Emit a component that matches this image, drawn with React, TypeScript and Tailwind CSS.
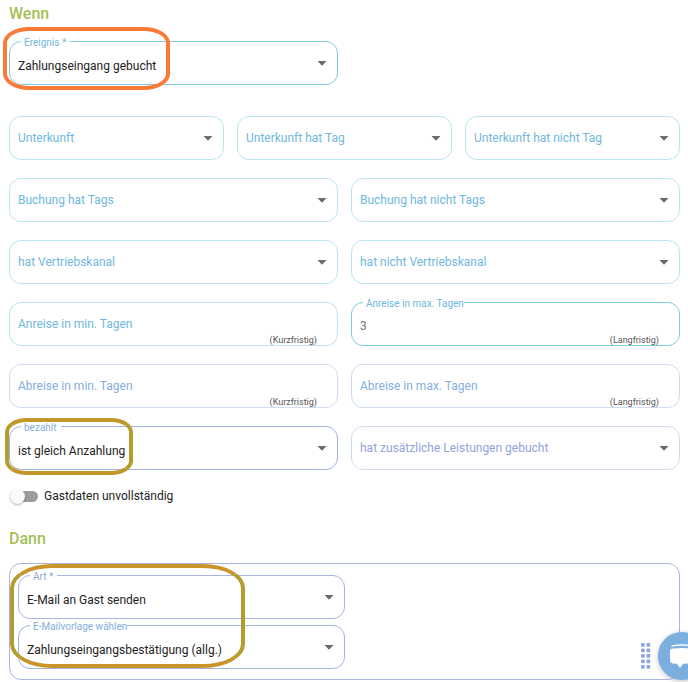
import React, { useState } from 'react'
import clsx from 'clsx'

type Tone = 'aqua' | 'sky' | 'lilac'

const borders: Record<Tone, { empty: string, filled: string }> = {
    aqua: { empty: 'border-[#bce4ef]', filled: 'border-[#7fcade]' },
    sky: { empty: 'border-[#cfdcf2]', filled: 'border-[#9fb4e2]' },
    lilac: { empty: 'border-[#d5daf1]', filled: 'border-[#a9b4e2]' },
}

const labels: Record<Tone, string> = {
    aqua: 'text-[#6fb8dc]',
    sky: 'text-[#86aedd]',
    lilac: 'text-[#90a5dc]',
}

interface FieldProps {
    id: string
    label: string
    value?: string
    tone?: Tone
    notch?: boolean
    hint?: string
    children?: React.ReactNode
}

const FieldLabel = ({ id, label, value, tone = 'aqua', notch }: FieldProps) => (
    <label
        htmlFor={id}
        className={clsx(
            'absolute pointer-events-none whitespace-nowrap',
            labels[tone],
            value ? 'left-[11px] -top-[6px] pl-[3px] text-[10px] leading-[14px] bg-white' : 'left-2 top-3 text-xs leading-[18px]',
            value && notch && 'pr-1'
        )}
    >
        {label}
    </label>
)

const SelectField = (props: FieldProps) => {
    const { id, value, tone = 'aqua', children } = props

    return (
        <div className={clsx('relative h-11 rounded-xl border', value ? borders[tone].filled : borders[tone].empty)}>
            <select
                id={id}
                defaultValue={value || ''}
                className={clsx('w-full h-full pl-2 pr-8 appearance-none bg-transparent text-xs text-[#222] rounded-xl focus:outline-none', value && 'pt-[6px]')}
            >
                <option value={value || ''}>{value || ''}</option>
            </select>
            <FieldLabel {...props} />
            <svg className="absolute right-[10px] top-[19px] pointer-events-none" width="10" height="5" viewBox="0 0 10 5">
                <path d="M.5 0h9L5 4.700z" fill="#6b6b6b" />
            </svg>
            {children}
        </div>
    )
}

const InputField = (props: FieldProps) => {
    const { id, value, tone = 'aqua', hint } = props

    return (
        <div className={clsx('relative h-11 rounded-xl border', value ? borders[tone].filled : borders[tone].empty)}>
            <input
                id={id}
                type="text"
                defaultValue={value}
                className="w-full h-full px-2 pt-1 bg-transparent text-xs text-[#777] rounded-xl focus:outline-none"
            />
            <FieldLabel {...props} />
            <span className="absolute right-[20px] -bottom-px text-[9px] leading-[11px] text-[#555] pointer-events-none">{hint}</span>
        </div>
    )
}

const Switch = ({ label }: { label: string }) => {
    const [checked, setChecked] = useState(false)

    return (
        <label className="flex items-center w-fit h-4 text-xs text-[#222]">
            <input type="checkbox" className="sr-only" checked={checked} onChange={() => setChecked(!checked)} />
            <span className="relative w-7 h-[11px] ml-px mr-[6px] rounded-full bg-[#9c9c9c]">
                <span className={clsx('absolute -top-[2px] size-[15px] rounded-full bg-[#fafafa] shadow-[0_1px_2px_rgba(0,0,0,0.3)]', checked ? 'right-0' : 'left-0')} />
            </span>
            {label}
        </label>
    )
}

const ChatButton = () => (
    <button aria-label="Chat" className="fixed bottom-[2px] -right-[18px] size-12 rounded-full bg-[#7aafdf] shadow-[0_1px_5px_rgba(0,0,0,0.25)]">
        <svg width="48" height="48" viewBox="0 0 48 48" fill="none">
            <path d="M13.500 14.500Q15 13 24 13Q33 13 34.500 14.500" stroke="#fff" strokeWidth="1.3" />
            <path d="M15 16.500Q24 15.500 33 16.500Q36 16.500 36 19.500V28Q36 31 33 31.500L25 31.800L22 36L19 31.800L15 31.500Q12 31 12 28V19.500Q12 16.500 15 16.500Z" fill="#fff" />
        </svg>
    </button>
)

const App = () => {
    return (
        <div className="pl-[9px] pr-2 pb-[2px] bg-white font-['Roboto',sans-serif]">
            <h2 className="pt-1 text-base leading-5 font-medium text-[#a3c057]">Wenn</h2>
            <div className="grid grid-cols-2 gap-x-[13px] mt-[17px]">
                <SelectField id="event" label="Ereignis *" value="Zahlungseingang gebucht" notch>
                    <div className="absolute -left-[7px] -top-[15px] w-[167px] h-[63px] border-4 border-[#fb7a36] rounded-[26px/16px] pointer-events-none" />
                </SelectField>
            </div>

            <div className="grid grid-cols-3 gap-x-[13px] mt-[31px]">
                <SelectField id="unit" label="Unterkunft" />
                <SelectField id="unit-tag" label="Unterkunft hat Tag" />
                <SelectField id="unit-not-tag" label="Unterkunft hat nicht Tag" />
            </div>

            <div className="grid grid-cols-2 gap-x-[13px] gap-y-[18px] mt-[18px]">
                <SelectField id="booking-tags" label="Buchung hat Tags" />
                <SelectField id="booking-not-tags" label="Buchung hat nicht Tags" />
                <SelectField id="channel" label="hat Vertriebskanal" />
                <SelectField id="not-channel" label="hat nicht Vertriebskanal" />
                <InputField id="arrival-min" label="Anreise in min. Tagen" hint="(Kurzfristig)" />
                <InputField id="arrival-max" label="Anreise in max. Tagen" value="3" hint="(Langfristig)" />
                <InputField id="departure-min" label="Abreise in min. Tagen" hint="(Kurzfristig)" tone="sky" />
                <InputField id="departure-max" label="Abreise in max. Tagen" hint="(Langfristig)" tone="sky" />
                <SelectField id="paid" label="bezahlt" value="ist gleich Anzahlung" tone="sky" notch>
                    <div className="absolute -left-[5px] -top-[9px] w-[128px] h-[57px] border-4 border-x-[#b39d2b] border-y-[#c2982a] rounded-[22px/14px] pointer-events-none" />
                </SelectField>
                <SelectField id="services" label="hat zusätzliche Leistungen gebucht" tone="lilac" />
            </div>

            <div className="mt-[18px]">
                <Switch label="Gastdaten unvollständig" />
            </div>

            <h2 className="mt-[25px] text-base leading-5 font-medium text-[#a3c057]">Dann</h2>
            <div className="relative flex items-end justify-between mt-[14px] pt-[11px] pb-[10px] px-2 border border-[#a9b4e2] rounded-xl">
                <div className="flex flex-col w-1/2 gap-[6px]">
                    <SelectField id="action" label="Art *" value="E-Mail an Gast senden" tone="lilac" notch />
                    <SelectField id="template" label="E-Mailvorlage wählen" value="Zahlungseingangsbestätigung (allg.)" tone="sky" />
                </div>
                <svg className="mr-[20px]" width="10" height="26" viewBox="0 0 10 26" fill="#8ea6dc">
                    {[0, 1, 2, 3, 4].map((row) => (
                        <g key={row}>
                            <rect x="0" y={row * 5.5} width="3.800" height="3.800" rx="1" />
                            <rect x="5.500" y={row * 5.5} width="3.800" height="3.800" rx="1" />
                        </g>
                    ))}
                </svg>
                <div className="absolute left-0 top-0 w-[235px] h-[104px] border-4 border-x-[#b39d2b] border-y-[#ca942b] rounded-[42px/24px] pointer-events-none" />
            </div>
            <ChatButton />
        </div>
    )
}

export default App
